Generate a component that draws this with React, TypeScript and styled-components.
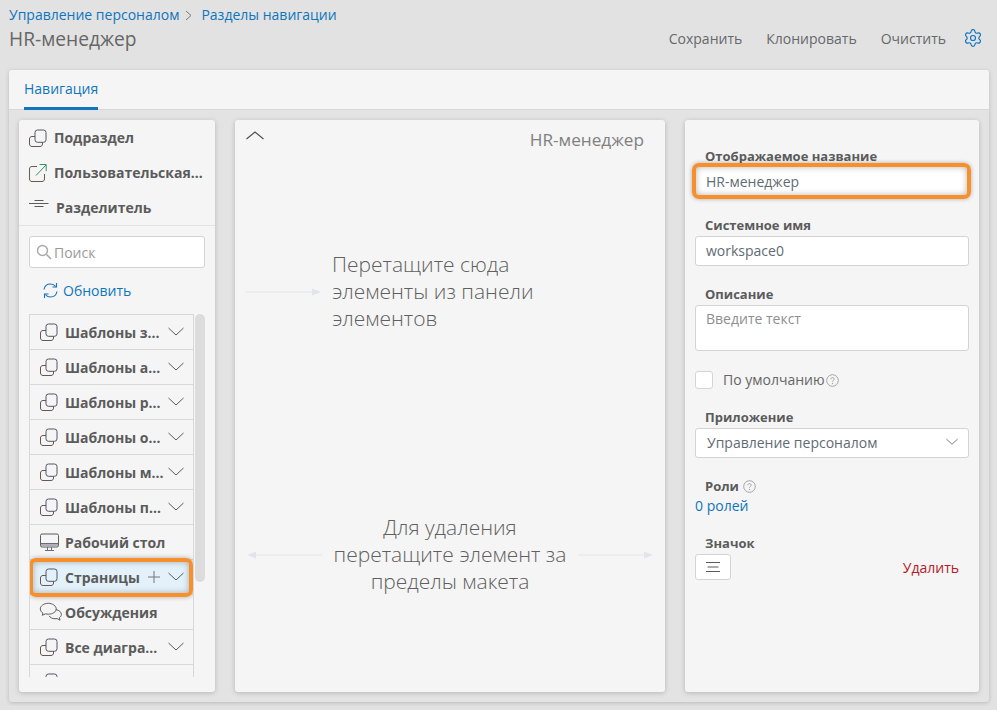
import React from "react";
import styled, { createGlobalStyle } from "styled-components";
import { Settings } from "lucide-react";

const Global = createGlobalStyle`
  html, body { margin: 0; padding: 0; height: 100%; }
  body { background: #e2e2e2; font-family: "Open Sans", "Noto Sans", sans-serif; font-size: 14px; color: #5b5b5b; overflow: hidden; }
  * { box-sizing: border-box; }
`;

const Page = styled.div`
  width: 997px; height: 710px; padding: 0 8px 8px 9px; display: flex; flex-direction: column;
`;
const Header = styled.header`
  height: 70px; flex: none; display: flex; justify-content: space-between; align-items: flex-start; padding-right: 6px;
`;
const TitleBlock = styled.div`padding-top: 5px;`;
const Crumbs = styled.div`
  display: flex; align-items: center; height: 19px; color: #0f75bc; font-size: 14px; line-height: 19px;
`;
const CrumbSep = styled.svg`width: 9px; height: 11px; margin: 1px 8px 0 5px; flex: none;`;
const Title = styled.h1`
  margin: 2px 0 0; font-size: 19.2px; font-weight: 400; line-height: 26px; color: #666;
`;
const Actions = styled.div`
  display: flex; align-items: center; gap: 24px; height: 26px; margin-top: 25px; color: #66686b; font-size: 14px;
`;
const Gear = styled(Settings)`margin-left: -7px; color: #0f75bc; flex: none;`;

const Card = styled.main`
  flex: 1; min-height: 0; background: #e3e3e3; border-radius: 3px; box-shadow: 0 1px 4px rgba(0,0,0,.18);
  display: flex; flex-direction: column;
`;
const TabBar = styled.div`
  height: 40px; flex: none; background: #f5f5f5; border-bottom: 1px solid #d8d8d8; padding-left: 15px; display: flex; border-radius: 3px 3px 0 0;
`;
const Tab = styled.div`
  height: 40px; width: 74px; text-align: center; color: #0f75bc; line-height: 38px; border-bottom: 3px solid #0f75bc; font-size: 14px;
`;
const Panels = styled.div`
  flex: 1; min-height: 0; padding: 10px 10px 10px; display: flex; gap: 20px;
`;
const Panel = styled.section<{ $w: number }>`
  width: ${p => p.$w}px; flex: none; background: #f5f5f5; border-radius: 3px; box-shadow: 0 1px 5px rgba(0,0,0,.2); position: relative; overflow: hidden;
`;
const LeftPanel = styled(Panel)`display: flex; flex-direction: column;`;
const ToolItem = styled.div<{ $gap?: number }>`
  height: 35px; display: flex; align-items: center; padding-left: 10px; gap: ${p => p.$gap ?? 5}px; font-weight: 700; color: #5b5b5b; font-size: 14px; white-space: nowrap;
`;
const ToolBox = styled.div`border-bottom: 1px solid #e2e2e2; height: 106px; flex: none;`;
const Search = styled.div`
  margin: 10px 10px 0; height: 32px; background: #fff; border: 1px solid #d4d4d4; border-radius: 3px; display: flex; align-items: center; padding-left: 6px; gap: 2px; color: #9a9a9a; flex: none;
`;
const Refresh = styled.div`
  height: 20px; margin: 12px 0 0 23px; display: flex; align-items: center; gap: 4px; color: #0f75bc; flex: none;
`;
const ListWrap = styled.div`
  position: relative; margin: 14px 10px 0; flex: none; height: 363px;
`;
const List = styled.ul`
  list-style: none; margin: 0; padding: 0; width: 165px; border: 1px solid #d8d8d8; border-bottom: none; height: 363px; overflow: hidden; background: #f5f5f5;
`;
const Row = styled.li<{ $hl?: boolean }>`
  height: 35px; display: flex; align-items: center; padding: 0 9px 0 10px; gap: 5px; border-bottom: 1px solid #d8d8d8; font-weight: 700; color: #5b5b5b; position: relative;
  background: ${p => p.$hl ? "#e3f1fa" : "transparent"};
  ${p => p.$hl ? `&::after { content: ""; position: absolute; left: -1px; right: 0; top: -2px; bottom: -3px; border: 4px solid #f78f2a; border-radius: 7px; box-shadow: 0 0 5px rgba(0,0,0,.3), inset 0 0 6px rgba(0,0,0,.28); }` : ""}
`;
const RowText = styled.span`
  flex: 1; min-width: 0; white-space: nowrap;
`;
const Scrollbar = styled.div`
  position: absolute; left: 166px; top: 0; width: 10px; height: 268px; background: #dcdcdc; border-radius: 5px;
`;
const Ico = styled.svg<{ $s?: number }>`
  width: ${p => p.$s ?? 20}px; height: ${p => p.$s ?? 20}px; flex: none; display: block;
`;
const TalkIco = styled(Ico)`margin: 0 -3px 0 -1px;`;
const PlusIco = styled(Ico)`margin-right: 3px;`;

const MiddlePanel = styled(Panel)`display: flex; flex-direction: column;`;
const MidTop = styled.div`
  display: flex; justify-content: space-between; align-items: flex-start; padding: 6px 21px 0 10px; height: 131px; flex: none;
`;
const MidTitle = styled.div`font-size: 17.2px; font-weight: 400; color: #808080; line-height: 28px;`;
const Hint = styled.div`
  font-size: 21px; font-weight: 300; line-height: 27px; color: #5f5f5f; white-space: nowrap;
`;
const HintA = styled.div`display: flex; align-items: center; padding-left: 11px; gap: 11px; height: 81px; flex: none;`;
const HintB = styled.div`display: flex; align-items: center; justify-content: space-between; padding: 0 12px; height: 81px; margin-top: 182px; flex: none;`;
const HintBText = styled(Hint)`text-align: center; width: 250px; flex: none;`;
const Arrow = styled.svg<{ $flip?: boolean }>`
  width: 75px; height: 10px; flex: none; display: block;
  ${p => p.$flip ? "transform: scaleX(-1);" : ""}
`;

const RightPanel = styled(Panel)`padding: 27px 10px 0;`;
const Label = styled.label`
  display: block; font-weight: 700; font-size: 13px; line-height: 18px; color: #5b5b5b; padding-left: 10px; margin-bottom: 2px;
`;
const Field = styled.div<{ $h?: number; $hl?: boolean }>`
  width: 274px; height: ${p => p.$h ?? 30}px; background: #fff; border: 1px solid #d4d4d4; border-radius: 3px; padding: 0 10px ${p => p.$hl ? 0 : 2}px; display: flex; align-items: ${p => p.$h ? "flex-start" : "center"}; font-size: 14px; color: #5f6b74; position: relative;
  ${p => p.$h ? "padding-top: 3px;" : ""}
  ${p => p.$hl ? `margin-top: -1px; &::after { content: ""; position: absolute; left: -4px; right: -3px; top: -4px; bottom: -4px; border: 4px solid #f78f2a; border-radius: 7px; box-shadow: 0 0 4px rgba(0,0,0,.3), inset 0 0 6px rgba(0,0,0,.3); }` : ""}
`;
const Placeholder = styled.span`color: #8e8e8e;`;
const Group = styled.div<{ $mt: number }>`margin-top: ${p => p.$mt}px;`;
const CheckRow = styled.div`display: flex; align-items: center; margin-top: 20px; color: #666; height: 18px; gap: 1px; line-height: 16px;`;
const CheckText = styled.span`margin-top: -1px;`;
const Check = styled.span`width: 18px; height: 18px; background: #fff; border: 1px solid #d4d4d4; border-radius: 3px; margin-right: 9px; flex: none;`;
const Select = styled(Field)`justify-content: space-between; padding-left: 11px; padding-right: 10px;`;
const InlineLabel = styled(Label)`display: flex; align-items: center; gap: 4px; margin-bottom: 0;`;
const RoleLink = styled.div`color: #0f75bc; line-height: 20px; margin-top: 1px;`;
const IconRow = styled.div`display: flex; justify-content: space-between; align-items: center; padding-right: 10px; height: 26px; width: 274px;`;
const IconBtn = styled.button`width: 36px; height: 26px; padding: 0; background: #fff; border: 1px solid #d4d4d4; border-radius: 3px; display: flex; align-items: center; justify-content: center;`;
const Delete = styled.span`color: #b3202a; font-size: 14px;`;

const Copy = () => (
  <Ico viewBox="0 0 20 20" fill="none">
    <path d="M6 8.5H3C1.5 8.5.5 9.5.5 11v5c0 1.5 1 2.5 2.5 2.5h8c1.5 0 2.5-1 2.5-2.5v-1.7" stroke="#6a5650" strokeWidth="1" />
    <rect x="6" y="2" width="11" height="12.3" rx="2.5" fill="none" stroke="#55556a" strokeWidth="1" />
  </Ico>
);
const Chevron = ({ w = 16, c = "#5b5b5b" }: { w?: number; c?: string }) => (
  <Ico $s={w} viewBox="0 0 16 16" fill="none"><path d="M.5 4l7.5 7 7.5-7" stroke={c} strokeWidth="1" /></Ico>
);
const Help = () => (
  <Ico $s={13} viewBox="0 0 13 13" fill="none">
    <circle cx="6.5" cy="6.5" r="5.8" stroke="#a5a5a5" />
    <path d="M4.8 5.2c0-1 .8-1.6 1.7-1.6s1.7.6 1.7 1.5c0 1.3-1.7 1.3-1.7 2.6" stroke="#a5a5a5" />
    <circle cx="6.5" cy="9.5" r=".7" fill="#a5a5a5" />
  </Ico>
);
const Right = ({ flip }: { flip?: boolean }) => (
  <Arrow $flip={flip} viewBox="0 0 75 10">
    <path d="M0 5h66" stroke="#e1e5e9" strokeWidth="1" />
    <path d="M66 1.5L75 5l-9 3.5z" fill="#dfe5ea" />
  </Arrow>
);

const rows = ["Шаблоны з...", "Шаблоны а...", "Шаблоны р...", "Шаблоны о...", "Шаблоны м...", "Шаблоны п..."];

export default function App() {
  return (
    <Page>
      <Global />
      <Header>
        <TitleBlock>
          <Crumbs>
            Управление персоналом
            <CrumbSep viewBox="0 0 9 11" fill="none"><path d="M2 1l5 4.5L2 10" stroke="#777" /></CrumbSep>
            Разделы навигации
          </Crumbs>
          <Title>HR-менеджер</Title>
        </TitleBlock>
        <Actions>
          <span>Сохранить</span>
          <span>Клонировать</span>
          <span>Очистить</span>
          <Gear size={20} strokeWidth={1.4} />
        </Actions>
      </Header>
      <Card>
        <TabBar><Tab>Навигация</Tab></TabBar>
        <Panels>
          <LeftPanel $w={196}>
            <ToolBox>
              <ToolItem><Copy />Подраздел</ToolItem>
              <ToolItem>
                <Ico viewBox="0 0 20 20" fill="none">
                  <path d="M8 3.5H3C1.5 3.5.5 4.5.5 6v10c0 1.5 1 2.5 2.5 2.5h10c1.5 0 2.5-1 2.5-2.5v-5" stroke="#6b5a45" />
                  <path d="M7 12.5L17 2M10.5 1.5h6.7v6.7" stroke="#3f8f6a" />
                </Ico>
                Пользовательская...
              </ToolItem>
              <ToolItem $gap={7}>
                <Ico viewBox="0 0 20 20" fill="none">
                  <path d="M0 5.5h19.5M5.5 2.5h9M5.5 8.5h9" stroke="#5b5b5b" />
                </Ico>
                Разделитель
              </ToolItem>
            </ToolBox>
            <Search>
              <Ico $s={16} viewBox="0 0 16 16" fill="none">
                <circle cx="6.5" cy="6.5" r="5" stroke="#a8a8a8" strokeWidth="1.4" />
                <path d="M10.5 10.5l4.5 4.5" stroke="#a8a8a8" strokeWidth="1.6" />
              </Ico>
              Поиск
            </Search>
            <Refresh>
              <Ico $s={17} viewBox="0 0 17 17" fill="none">
                <path d="M2 7.5C2.6 4.3 5.2 2 8.5 2c2.2 0 4 .9 5.2 2.5M15 9.5c-.6 3.2-3.2 5.5-6.5 5.5-2.2 0-4-.9-5.2-2.5" stroke="#0f75bc" strokeWidth="1.1" />
                <path d="M14.5 1v4h-4M2.5 16v-4h4" stroke="#0f75bc" strokeWidth="1.1" />
              </Ico>
              Обновить
            </Refresh>
            <ListWrap>
              <List>
                {rows.map(r => (
                  <Row key={r}><Copy /><RowText>{r}</RowText><Chevron /></Row>
                ))}
                <Row>
                  <Ico viewBox="0 0 20 20" fill="none">
                    <rect x=".5" y="2" width="18" height="13" rx="1.5" stroke="#5b5b5b" />
                    <path d="M.5 11.5h18M.5 13h18M7.5 15v3M11.5 15v3M5 18.5h9" stroke="#6b6b7a" />
                  </Ico>
                  <RowText>Рабочий стол</RowText>
                </Row>
                <Row $hl>
                  <Copy />
                  <RowText>Страницы</RowText>
                  <PlusIco $s={12} viewBox="0 0 12 12" fill="none"><path d="M6 0v12M0 6h12" stroke="#777" /></PlusIco>
                  <Chevron />
                </Row>
                <Row>
                  <TalkIco $s={24} viewBox="0 0 22 20" fill="none">
                    <path d="M8.5 2C4.5 2 1.2 4.3 1.2 7.2c0 1.5 1 2.9 2.4 3.8L3 13l3-1.3c.8.2 1.6.3 2.5.3 4 0 7.3-2.1 7.3-4.8S12.5 2 8.5 2z" stroke="#5b5b5b" strokeWidth=".9" />
                    <path d="M15.7 7.8c2.8.6 4.8 2.4 4.8 4.4 0 1.2-.7 2.3-1.8 3l.6 2.3-2.8-1.5c-.6.1-1.2.2-1.8.2-2.4 0-4.5-1-5.4-2.7" stroke="#5b5b5b" strokeWidth=".9" />
                  </TalkIco>
                  <RowText>Обсуждения</RowText>
                </Row>
                <Row><Copy /><RowText>Все диагра...</RowText><Chevron /></Row>
                <Row><Copy /><RowText></RowText></Row>
              </List>
              <Scrollbar />
            </ListWrap>
          </LeftPanel>

          <MiddlePanel $w={430}>
            <MidTop>
              <Ico $s={20} viewBox="0 0 20 14" fill="none"><path d="M1.5 10L10 3l8.5 7" stroke="#4f4f4f" strokeWidth="1.1" /></Ico>
              <MidTitle>HR-менеджер</MidTitle>
            </MidTop>
            <HintA>
              <Right />
              <Hint>Перетащите сюда<br />элементы из панели<br />элементов</Hint>
            </HintA>
            <HintB>
              <Right flip />
              <HintBText>Для удаления<br />перетащите элемент за<br />пределы макета</HintBText>
              <Right />
            </HintB>
          </MiddlePanel>

          <RightPanel $w={294}>
            <Label>Отображаемое название</Label>
            <Field $hl>HR-менеджер</Field>
            <Group $mt={20}>
              <Label>Системное имя</Label>
              <Field>workspace0</Field>
            </Group>
            <Group $mt={19}>
              <Label>Описание</Label>
              <Field $h={46}><Placeholder>Введите текст</Placeholder></Field>
            </Group>
            <CheckRow><Check /><CheckText>По умолчанию</CheckText><Help /></CheckRow>
            <Group $mt={19}>
              <Label>Приложение</Label>
              <Select>Управление персоналом<Chevron w={12} /></Select>
            </Group>
            <Group $mt={19}>
              <InlineLabel>Роли <Help /></InlineLabel>
              <RoleLink>0 ролей</RoleLink>
            </Group>
            <Group $mt={18}>
              <Label>Значок</Label>
              <IconRow>
                <IconBtn>
                  <Ico $s={14} viewBox="0 0 14 14" fill="none"><path d="M0 2.5h14M1.5 7h11M0 11.5h14" stroke="#5b5b5b" /></Ico>
                </IconBtn>
                <Delete>Удалить</Delete>
              </IconRow>
            </Group>
          </RightPanel>
        </Panels>
      </Card>
    </Page>
  );
}
